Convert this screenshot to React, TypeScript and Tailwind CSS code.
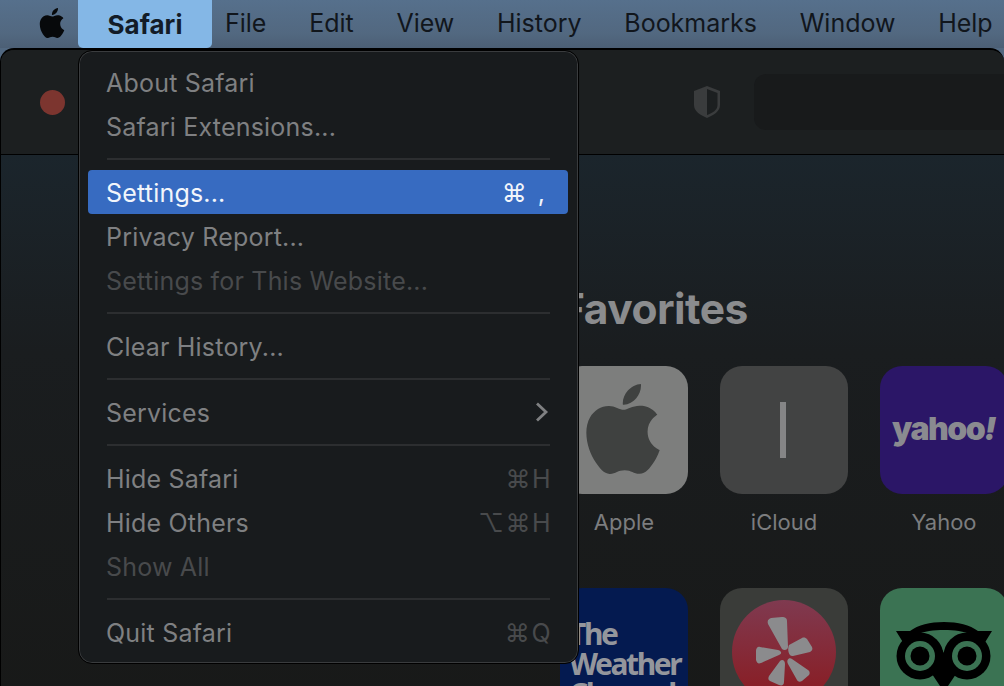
import React from "react";
import { SiApple } from "react-icons/si";

const MENU_BAR = ["File", "Edit", "View", "History", "Bookmarks", "Window", "Help"];

type MenuEntry =
  | { kind: "sep" }
  | { kind: "item"; label: string; hint?: string; dim?: boolean; active?: boolean; arrow?: boolean };

const MENU: MenuEntry[] = [
  { kind: "item", label: "About Safari" },
  { kind: "item", label: "Safari Extensions..." },
  { kind: "sep" },
  { kind: "item", label: "Settings...", hint: "⌘ ,", active: true },
  { kind: "item", label: "Privacy Report..." },
  { kind: "item", label: "Settings for This Website...", dim: true },
  { kind: "sep" },
  { kind: "item", label: "Clear History..." },
  { kind: "sep" },
  { kind: "item", label: "Services", arrow: true },
  { kind: "sep" },
  { kind: "item", label: "Hide Safari", hint: "⌘H" },
  { kind: "item", label: "Hide Others", hint: "⌥⌘H" },
  { kind: "item", label: "Show All", dim: true },
  { kind: "sep" },
  { kind: "item", label: "Quit Safari", hint: "⌘Q" },
];

const SafariMenu = () => (
  <div className="absolute left-[78px] top-[50px] w-[501px] h-[614px] rounded-[14px] border border-black bg-[#181b1d] shadow-[inset_0_0_0_1px_#3a3c3e] pt-[9px] pl-[9px] pr-[10px] font-['Inter',sans-serif] text-[25px] tracking-[0.2px]">
    {MENU.map((entry, i) =>
      entry.kind === "sep" ? (
        <div key={i} className="h-[22px] flex items-center pl-[19px] pr-[18px]">
          <div className="h-[2px] w-full bg-[#2c2e30]" />
        </div>
      ) : (
        <div
          key={i}
          className={`h-[44px] flex items-center justify-between pt-[4px] pl-[18px] pr-[18px] rounded-[4px] ${
            entry.active ? "bg-[#376bc1] text-[#f2f5fb]" : entry.dim ? "text-[#484a4c]" : "text-[#7f8082]"
          }`}
        >
          <span>{entry.label}</span>
          {entry.hint && (
            <span
              className={`font-['Inter','DejaVu_Sans',sans-serif] ${
                entry.active ? "text-[#f2f5fb] tracking-[2px] pr-[3px]" : "text-[#484a4c] tracking-[1.5px] mr-[-2px]"
              }`}
            >
              {entry.hint}
            </span>
          )}
          {entry.arrow && (
            <svg width="14" height="22" viewBox="0 0 14 22" fill="none" className="mr-[1px] mb-[4px]">
              <path d="M2 2.5L11 11L2 19.5" stroke="#7f8082" strokeWidth="2.8" />
            </svg>
          )}
        </div>
      )
    )}
  </div>
);

const Tile = ({ bg, label, children }: { bg: string; label?: string; children?: React.ReactNode }) => (
  <div className="w-[128px] flex flex-col items-center shrink-0">
    <div className={`w-[128px] h-[128px] rounded-[22px] overflow-hidden flex items-center justify-center ${bg}`}>
      {children}
    </div>
    {label && <div className="mt-[14px] text-[22px] leading-[28px] text-[#7c7d7f]">{label}</div>}
  </div>
);

const Yelp = () => (
  <svg width="104" height="104" viewBox="0 0 104 104" className="self-start mt-[12px]">
    <defs>
      <linearGradient id="yelp" x1="0" y1="0" x2="0" y2="1">
        <stop offset="0" stopColor="#7f3a50" />
        <stop offset="1" stopColor="#8a1a1f" />
      </linearGradient>
    </defs>
    <circle cx="52" cy="52" r="52" fill="url(#yelp)" />
    <g fill="#8b8b8d">
      <path d="M36 24C35 21 36 19 39 18L50 17C53 17 55 18 55 21L56 47C56 50 52 51 50 49z" />
      <path d="M57 45L70 38C72 37 74 38 75 39L80 47C81 49 80 51 78 52L61 56C57 57 55 50 57 45z" />
      <path d="M47 55L29 63C26 64 25 63 24 60V51C24 48 26 46 28 47L46 50C50 51 50 54 47 55z" />
      <path d="M53 64L52 82C52 85 50 86 47 85L38 81C36 80 36 78 37 76L48 61C50 59 53 60 53 64z" />
      <path d="M60 59L76 70C78 71 78 74 77 75L70 81C68 82 66 82 65 80L56 64C54 60 57 57 60 59z" />
    </g>
  </svg>
);

const Owl = () => (
  <svg width="96" height="72" viewBox="0 0 96 72" className="self-start mt-[34px]">
    <path d="M0 9H14C22 3 34 0 48 0s26 3 34 9H96L88 22 60 52 48 70 36 52 8 22z" fill="#000" />
    <path d="M20 13C28 9 38 8 48 8s20 1 28 5c-12 1-22 7-28 18C42 20 32 14 20 13z" fill="#3b7353" />
    <circle cx="24" cy="34" r="23.5" fill="#000" />
    <circle cx="71" cy="34" r="23.5" fill="#000" />
    <circle cx="24" cy="34" r="15" fill="#3b7353" />
    <circle cx="71" cy="34" r="15" fill="#3b7353" />
    <circle cx="24" cy="34" r="9.5" fill="#000" />
    <circle cx="71" cy="34" r="9.5" fill="#000" />
  </svg>
);

export default function App() {
  return (
    <div className="relative w-[1004px] h-[686px] overflow-hidden flex flex-col bg-[#526880] font-['Inter',sans-serif]">
      <div className="h-[48px] shrink-0 flex items-center bg-[linear-gradient(180deg,#56708c_0%,#526880_70%,#4c5f75_100%)] text-[25px] text-[#11161c]">
        <div className="w-[78px] flex justify-center pl-[28px] pr-[2px] mb-[3px]">
          <SiApple size={30} color="#07090b" />
        </div>
        <div className="w-[134px] h-full flex items-center justify-center rounded-b-[5px] bg-[#84b7e6] font-bold text-[26px] text-[#131c28]">
          Safari
        </div>
        <div className="flex items-center gap-[42.7px] pl-[13px] whitespace-nowrap">
          {MENU_BAR.map((m) => (
            <span key={m}>{m}</span>
          ))}
        </div>
      </div>

      <div className="flex-1 flex flex-col rounded-t-[14px] border-t-2 border-l border-black bg-[#1b1e1f] overflow-hidden">
        <div className="h-[105px] shrink-0 flex items-center border-b border-black bg-[#1c1f20] pl-[39px]">
          <div className="w-[25px] h-[25px] rounded-full bg-[#7c352f]" />
          <svg width="28" height="34" viewBox="0 0 28 34" className="ml-[628px]">
            <path d="M14 1L27 6V20C27 26 21 30 14 33 7 30 1 26 1 20V6z" fill="#3a3c3d" />
            <path d="M14 4L24.5 8V20C24.5 25 19.5 28 14 30z" fill="#1c1f20" />
          </svg>
          <div className="ml-[33px] flex-1 h-[56px] rounded-l-[12px] bg-[#181a1b]" />
        </div>

        <div className="flex-1 pl-[559px] bg-[linear-gradient(180deg,#1b252c_0%,#1a1d1f_35%,#181918_100%)]">
          <h1 className="mt-[130px] text-[42.5px] leading-[48px] font-bold tracking-[-0.5px] text-[#8b8c8e] mb-[33px]">
            Favorites
          </h1>
          <div className="flex flex-col gap-[52px]">
            <div className="flex gap-[32px]">
              <Tile bg="bg-[#7d7e7d]" label="Apple">
                <SiApple size={90} color="#3f4140" className="mb-[2px] mr-[2px]" />
              </Tile>
              <Tile bg="bg-[#424343]" label="iCloud">
                <div className="w-[6px] h-[56px] mr-[2px] bg-[#858586]" />
              </Tile>
              <Tile bg="bg-[#2b1667]" label="Yahoo">
                <span className="font-['Inter',sans-serif] font-black text-[32px] tracking-[-1.5px] text-[#8a8a90] mb-[2px] mr-[1px]">
                  yahoo<span className="italic">!</span>
                </span>
              </Tile>
            </div>
            <div className="flex gap-[32px]">
              <Tile bg="bg-[#041a50]">
                <div className="w-full pl-[9px] pt-[31px] self-start font-['Noto_Sans',sans-serif] font-bold text-[30px] leading-[30px] text-[#94969c] tracking-[-2.4px]">
                  The
                  <br />
                  Weather
                  <br />
                  Channel
                </div>
              </Tile>
              <Tile bg="bg-[#3a3c39]">
                <Yelp />
              </Tile>
              <Tile bg="bg-[#3b7353]">
                <Owl />
              </Tile>
            </div>
          </div>
        </div>
      </div>

      <SafariMenu />
    </div>
  );
}
